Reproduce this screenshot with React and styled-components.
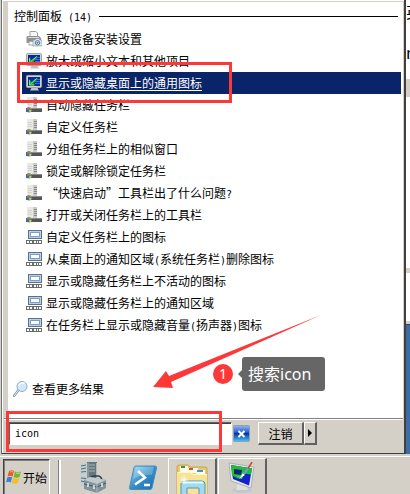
import React from "react";
import styled, { createGlobalStyle, css } from "styled-components";

const face = "#d4d0c8";
const red = "#fd3838";

const GlobalStyle = createGlobalStyle`
  * { box-sizing: border-box; }
  body {
    margin: 0;
    overflow: hidden;
    background: ${face};
    color: #000;
    font: 12px/22px "Noto Sans CJK SC", sans-serif;
  }
`;

const Page = styled.div`
  position: relative;
  display: flex;
  flex-direction: column;
  height: 100vh;
  overflow: hidden;
`;
const Desktop = styled.div`
  flex: 1;
  display: flex;
  min-height: 0;
`;
const Menu = styled.main`
  flex: 1;
  min-width: 0;
  display: flex;
  flex-direction: column;
  margin-left: 1px;
  padding-top: 1px;
  background: ${face};
  border: solid #404040;
  border-width: 0 2px 1px 1px;
  border-left-color: #707070;
  box-shadow: inset 1px 0 #fff, inset 0 1px #fff;
`;
const Results = styled.section`
  flex: 1;
  display: flex;
  flex-direction: column;
  margin: 0 1px 0 6px;
  padding: 3px 0 18px;
  background: #fff;
  border-top: 1px solid ${face};
`;
const Heading = styled.h2`
  display: flex;
  align-items: center;
  gap: 7px;
  margin: 0 5px 0 6px;
  font-size: 12px;
  font-weight: 400;
  line-height: 22px;
  white-space: pre;
  &::after {
    content: "";
    flex: 1;
    height: 1px;
    background: #000;
  }
`;
const Latin = styled.span`
  font: 10px/12px "DejaVu Sans Mono", monospace;
`;
const List = styled.ul`
  margin: 1px 2px 0 14px;
  padding: 0;
  list-style: none;
`;
const ResultLink = styled.a`
  display: flex;
  align-items: center;
  gap: 4px;
  height: 22px;
  padding-left: 4px;
  color: #000;
  text-decoration: none;
  white-space: nowrap;
  ${(p) => p.$selected && css`
    background: #0a246a;
    color: #fff;
    text-decoration: underline;
    text-underline-offset: 2px;
  `}
`;
const MoreLink = styled(ResultLink)`
  margin-top: auto;
`;
const Icon = styled.svg`
  flex: none;
  width: ${(p) => p.$w || 16}px;
  height: ${(p) => p.$h || p.$w || 16}px;
`;
const Footer = styled.form`
  display: flex;
  align-items: center;
  margin: 0 1px 0 2px;
  padding: 3px 5px 8px;
  border-top: 1px solid #808080;
  box-shadow: inset 0 1px #fff;
`;
const SearchInput = styled.input`
  flex: 0 1 223px;
  min-width: 0;
  height: 23px;
  padding: 0 5px;
  border: 1px solid;
  border-color: #606060 #fff #fff #606060;
  border-radius: 0;
  outline: 0;
  background: #fff;
  box-shadow: inset 0 1px #404040;
  font: 10px "DejaVu Sans Mono", monospace;
`;
const ClearButton = styled.button`
  display: flex;
  margin-left: 1px;
  padding: 0;
  border: 0;
  background: none;
`;
const raised = css`
  border: solid;
  border-width: 1px 2px 2px 1px;
  border-color: #fff #606060 #606060 #fff;
  background: ${face};
`;
const PushButton = styled.button`
  ${raised}
  display: flex;
  align-items: center;
  justify-content: center;
  width: ${(p) => p.$w}px;
  height: 23px;
  margin-left: ${(p) => p.$gap || 0}px;
  padding: 0;
  color: #000;
  font: 12px "Noto Sans CJK SC", sans-serif;
`;
const Behind = styled.aside`
  width: 4px;
  display: flex;
  flex-direction: column;
  overflow: hidden;
  background: #3a6ea5;
`;
const Band = styled.div`
  flex: none;
  height: ${(p) => p.$h}px;
  overflow: hidden;
  background: ${(p) => p.$c};
  font-size: 16px;
  line-height: 22px;
  white-space: nowrap;
`;
const Taskbar = styled.nav`
  display: flex;
  height: 40px;
  padding: 1px 3px 0;
  border-top: 2px solid ${face};
  background: ${face};
  box-shadow: inset 0 1px #fff;
`;
const StartButton = styled.button`
  display: flex;
  align-items: center;
  gap: 1px;
  width: 47px;
  margin-top: 2px;
  padding: 0 2px;
  border: solid;
  border-width: 1px 1px 0;
  border-color: #404040 #fff #fff #404040;
  background: ${face};
  box-shadow: inset 1px 1px #808080;
  color: #000;
  font: 12px "Noto Sans CJK SC", sans-serif;
`;
const Separator = styled.div`
  width: 3px;
  margin: 3px 7px 0 8px;
  border-left: 1px solid #808080;
  border-right: 2px solid #fff;
`;
const TaskButton = styled.button`
  ${raised}
  display: flex;
  justify-content: center;
  align-items: flex-start;
  width: ${(p) => (p.$open ? 49 : 50)}px;
  margin: 1px 1px 0 0;
  padding: 3px 0 0;
  border-bottom: 0;
  ${(p) => !p.$open && css`border-color: transparent; margin-right: 0;`}
`;

const Frame = styled.div`
  position: absolute;
  left: ${(p) => p.$x}px;
  top: ${(p) => p.$y}px;
  width: ${(p) => p.$w}px;
  height: ${(p) => p.$h}px;
  border: 3px solid ${red};
  pointer-events: none;
`;
const ArrowMark = styled.svg`
  position: absolute;
  left: 152px;
  top: 314px;
  width: 170px;
  height: 76px;
  pointer-events: none;
`;
const Callout = styled.div`
  position: absolute;
  left: 213px;
  top: 357px;
  display: flex;
  align-items: center;
  gap: 9px;
`;
const Badge = styled.span`
  width: 20px;
  height: 20px;
  border-radius: 50%;
  background: ${red};
  color: #fff;
  font: 14px/20px "Noto Sans", sans-serif;
  text-align: center;
`;
const Tip = styled.span`
  position: relative;
  width: 83px;
  padding-left: 6px;
  border-radius: 3px;
  background: #666;
  color: #fff;
  font: 16px/34px "Noto Sans", "Noto Sans CJK SC", sans-serif;
  white-space: nowrap;
  &::before {
    content: "";
    position: absolute;
    left: -4px;
    top: 13px;
    border: solid transparent;
    border-width: 4px 4px 4px 0;
    border-right-color: #666;
  }
`;

const Printer = () => (
  <Icon viewBox="0 0 16 16">
    <path d="M4 .5h6l1.500 1.500V6H4z" fill="#f4f6f8" stroke="#a0a0a0" />
    <path d="M1 5h12l2 2v5H.5V6z" fill="#8f9295" />
    <path d="M2 6.500h11" stroke="#d8d8d8" />
    <path d="M3 10.500h7v3.500H3z" fill="#f8f8f8" stroke="#aaa" />
    <path d="M7 9h2l1-1.500h3L14 9h2v6H7z" fill="#d9e3e9" stroke="#8297a5" strokeWidth=".6" />
    <circle cx="11.500" cy="11.800" r="2.200" fill="#f0f8fc" stroke="#557486" />
    <circle cx="11.500" cy="11.800" r="1" fill="#2d6f9d" />
  </Icon>
);
const Display = () => (
  <Icon viewBox="0 0 16 16">
    <path d="M6 12h5l2 3.500H4z" fill="#bfc2c0" />
    <rect x="0.500" y="0.500" width="15" height="12" rx="1" fill="#cfd0c8" stroke="#a4a69f" />
    <rect x="2" y="2" width="12" height="9" fill="#0925a8" />
    <path d="M9 4.500h5M8 6.500h6M9 8.500h5" stroke="#2874ef" />
    <path d="M3 4v6.500h6.500L7.500 8.500 12 4l-1.500-1L5.500 7z" fill="#1ca832" />
    <path d="M3.500 5v5h4.500M4.500 9l6-5.500" stroke="#98f37e" strokeWidth=".8" fill="none" />
  </Icon>
);
const TaskbarProps = () => (
  <Icon viewBox="0 0 16 16">
    <path d="M1 0h6v12H1z" fill="#e9e9e6" />
    <path d="M7 0h4v12H7z" fill="#cbcbc8" />
    <path d="M2 3.500h4M2 5.500h4M2 7.500h4" stroke="#d2d2cf" />
    <path d="M8 2.500h3M8 4.500h3M8 6.500h3M8 8.500h3" stroke="#888884" />
    <path d="M0 11h16v4H0z" fill="#555656" />
    <path d="M5 11.500h11" stroke="#8c8c8c" />
    <circle cx="3" cy="12.800" r="2.600" fill="#2b72c8" />
    <path d="M3 12.500v-2.300A2.600 2.600 0 0 0 .4 12.500z" fill="#ed632b" />
    <path d="M3.300 12.500v-2.300a2.600 2.600 0 0 1 2.300 2.300z" fill="#75bd30" />
    <path d="M3.300 13v2.400A2.600 2.600 0 0 0 5.600 13z" fill="#f4c82b" />
  </Icon>
);
const TrayIcon = () => (
  <Icon viewBox="0 0 16 16">
    <rect x="2.500" y="1.500" width="13" height="8" fill="#b4d2f2" stroke="#60707e" />
    <rect x="4.500" y="3.500" width="9" height="4" fill="#fff" stroke="#7b9ec1" />
    <path d="M0 11h16v4H0z" fill="#686c6b" />
    <path d="M1 13h2M4 13h2M8 13h2M11 13h1M13 13h2" stroke="#fff" strokeWidth="2" />
  </Icon>
);
const Magnifier = () => (
  <Icon viewBox="0 0 16 16">
    <path d="M2 15l4.500-6" stroke="#8798a5" strokeWidth="2.400" strokeLinecap="round" />
    <path d="M2 15l4.500-6" stroke="#e3ebf0" strokeLinecap="round" />
    <circle cx="10" cy="5.500" r="5" fill="#cfe8fc" stroke="#91acc1" />
    <path d="M6.500 5.500a4 4 0 0 1 6-3" stroke="#fff" strokeWidth="1.600" fill="none" />
  </Icon>
);
const ClearIcon = () => (
  <Icon viewBox="0 0 17 17" $w={17}>
    <defs>
      <linearGradient id="clear" x2="0" y2="1">
        <stop stopColor="#94b6ee" /><stop offset=".4" stopColor="#3463d2" />
        <stop offset=".5" stopColor="#0832a8" /><stop offset="1" stopColor="#48c8ef" />
      </linearGradient>
    </defs>
    <rect x=".5" y=".5" width="16" height="16" rx="1" fill="url(#clear)" stroke="#8ba1bb" />
    <path d="M5.500 6l6 6m0-6l-6 6" stroke="#fff" strokeWidth="2" />
  </Icon>
);
const WindowsLogo = () => (
  <Icon viewBox="0 0 16 16">
    <path d="M3 2q3-1.500 5 0L6.500 7.500q-2.500-1.500-5 0z" fill="#e85924" />
    <path d="M9 2.500q3 1.500 6 0L13.500 8q-3 1.500-6 0z" fill="#75b62b" />
    <path d="M1.200 8.500q2.500-1.500 5 0L4.700 13.500q-2.500-1.500-4.700 0z" fill="#3b80d0" />
    <path d="M7.200 9q3 1.500 6 0L11.700 14q-3 1.500-6 0z" fill="#f7bd22" />
    <path d="M4 3q2-.8 3 0M10 4q2 .8 4 0" stroke="#fff" opacity=".5" fill="none" />
  </Icon>
);
const ServerManager = () => (
  <Icon viewBox="0 0 30 32" $w={30} $h={32}>
    <path d="M2 2l7-2v26l-7-3z" fill="#c4cfd1" />
    <path d="M9 0h10v26H9z" fill="#65777d" />
    <path d="M3 4l5-1M3 7l5-1M3 10l5-.5M3 16l5 .5M3 19l5 1" stroke="#53686e" />
    <path d="M11 3h6M11 6h6M11 9h6" stroke="#a6b5b8" />
    <path d="M10 1v24M18.500 1v16" stroke="#aab9bc" />
    <path d="M12 17q1-3 4-3h4q3 0 4 4" fill="none" stroke="#313b40" strokeWidth="1.600" />
    <path d="M6 18l6-3 16 3v8l-9 5L6 27z" fill="#82939a" />
    <path d="M6 18l6-3 16 3-9 4z" fill="#c0cacd" />
    <path d="M6 22l13 3 9-4" stroke="#48575e" fill="none" />
    <path d="M19 22v9" stroke="#aebabe" />
    <path d="M10 21v4M16 23v4M24 21v4" stroke="#e9eeef" strokeWidth="1.500" />
  </Icon>
);
const PowerShell = () => (
  <Icon viewBox="0 -2 30 30" $w={30} $h={30}>
    <defs>
      <linearGradient id="shell" x2="1" y2="1">
        <stop stopColor="#a4dcf5" /><stop offset=".5" stopColor="#368fc8" /><stop offset="1" stopColor="#176ba9" />
      </linearGradient>
    </defs>
    <path d="M8 2h19q2 0 1.500 2L24 24q-.5 1.500-2 1.500H3q-2 0-1.500-2L6 3.500Q6.500 2 8 2z" fill="url(#shell)" stroke="#4390bd" />
    <path d="M8 3h18l-2 8Q14 10 5 15z" fill="#fff" opacity=".23" />
    <path d="M10 7l7 6.500-10 7M16 21h6" fill="none" stroke="#fff" strokeWidth="2.500" />
  </Icon>
);
const Explorer = () => (
  <Icon viewBox="0 0 34 34" $w={34} $h={34}>
    <path d="M2 5q0-2 2-2h9l2 2h15q2 0 2 2v25H2z" fill="#eac968" stroke="#c6a34a" />
    <path d="M5 4h8v6H5zM13 6h10v5H13zM21 8h9v5h-9z" fill="#fffced" />
    <path d="M6 4h4v2H6z" fill="#2b9c38" /><path d="M14 6h4v2h-4z" fill="#e14b30" /><path d="M22 8h6v2h-6z" fill="#3495dc" />
    <path d="M2 10h13l3 2h14v20H2z" fill="#f8e394" />
    <path d="M3 10.500h12l3 2h14" stroke="#fff7c4" fill="none" />
    <path d="M6 34V22q0-3 3-3h18q3 0 3 3v12h-6v-8H12v8z" fill="#a5d8f0" stroke="#469abd" />
    <path d="M8 20.500h20" stroke="#e4f8ff" strokeWidth="2" />
    <path d="M9 13v9M5 18h8M6 15l6 6m0-6l-6 6" stroke="#fff" strokeWidth=".8" />
  </Icon>
);
const Personalize = () => (
  <Icon viewBox="0 0 30 32" $w={30} $h={32}>
    <ellipse cx="15" cy="28" rx="10" ry="3" fill="#c3c7c7" />
    <path d="M11 21h8l2 7H9z" fill="#dde0df" />
    <path d="M2 1l25 4-3 21L4 19z" fill="#e6e9e9" stroke="#aab0b0" />
    <path d="M4 3l21 3.500-3 17L6 17z" fill="#1022c8" />
    <path d="M4 3l21 3.500-1 6-7-1-6 5-6-3z" fill="#20bf32" />
    <path d="M7 7l8 1-1 5-7-1z" fill="#092380" />
    <path d="M9 13l4 1 4-2-2 5-4-1z" fill="#37d13d" />
    <path d="M12 17l4-6 2 2z" fill="#fff" />
    <path d="M17 12l4.500-6" stroke="#679bed" strokeWidth="2" />
    <path d="M21 6.500L25 0" stroke="#cb4430" strokeWidth="1.500" />
  </Icon>
);

const results = [
  [Printer, "更改设备安装设置"],
  [Display, "放大或缩小文本和其他项目"],
  [Display, "显示或隐藏桌面上的通用图标"],
  [TaskbarProps, "自动隐藏任务栏"],
  [TaskbarProps, "自定义任务栏"],
  [TaskbarProps, "分组任务栏上的相似窗口"],
  [TaskbarProps, "锁定或解除锁定任务栏"],
  [TaskbarProps, "“快速启动”工具栏出了什么问题?"],
  [TaskbarProps, "打开或关闭任务栏上的工具栏"],
  [TrayIcon, "自定义任务栏上的图标"],
  [TrayIcon, "从桌面上的通知区域(系统任务栏)删除图标"],
  [TrayIcon, "显示或隐藏任务栏上不活动的图标"],
  [TrayIcon, "显示或隐藏任务栏上的通知区域"],
  [TrayIcon, "在任务栏上显示或隐藏音量(扬声器)图标"],
];

const Label = ({ text }) => (
  <span>
    {text.split(/([()?])/).map((part, i) => (i % 2 ? <Latin key={i}>{part}</Latin> : part))}
  </span>
);

export default function App() {
  return (
    <Page lang="zh-CN">
      <GlobalStyle />
      <Desktop>
        <Menu>
          <Results>
            <Heading><span>控制面板<Latin> (14)</Latin></span></Heading>
            <List>
              {results.map(([Glyph, text], i) => (
                <li key={text}>
                  <ResultLink href="#" $selected={i === 2}><Glyph /><Label text={text} /></ResultLink>
                </li>
              ))}
            </List>
            <MoreLink href="#"><Magnifier />查看更多结果</MoreLink>
          </Results>
          <Footer onSubmit={(e) => e.preventDefault()}>
            <SearchInput aria-label="搜索" defaultValue="icon" />
            <ClearButton type="button" aria-label="清除"><ClearIcon /></ClearButton>
            <PushButton type="button" $w={46} $gap={8}>注销</PushButton>
            <PushButton type="button" $w={13} aria-label="更多选项">
              <Icon viewBox="0 0 4 8" $w={4} $h={8}><path d="M0 0l4 4-4 4z" /></Icon>
            </PushButton>
          </Footer>
        </Menu>
        <Behind aria-hidden="true">
          <Band $h={41} $c="#fff">英</Band>
          <Band $h={38} $c="#fff">m</Band>
          <Band $h={18} $c={face} />
          <Band $h={171} $c="#fff" />
          <Band $h={5} $c={face} />
          <Band $h={48} $c="#fff" />
          <Band $h={3} $c={face} />
          <Band $h={1} $c="#404040" />
        </Behind>
      </Desktop>
      <Taskbar>
        <StartButton><WindowsLogo />开始</StartButton>
        <Separator />
        <TaskButton aria-label="服务器管理器"><ServerManager /></TaskButton>
        <TaskButton aria-label="PowerShell"><PowerShell /></TaskButton>
        <TaskButton $open aria-label="资源管理器"><Explorer /></TaskButton>
        <TaskButton $open aria-label="个性化"><Personalize /></TaskButton>
      </Taskbar>
      <Frame $x={17} $y={62} $w={215} $h={41} />
      <Frame $x={6} $y={411} $w={216} $h={41} />
      <ArrowMark viewBox="0 0 170 76">
        <path d="M169 1L17 62l-3-5L1 73l20 1-2-6L28 64z" fill={red} />
      </ArrowMark>
      <Callout><Badge>1</Badge><Tip>搜索icon</Tip></Callout>
    </Page>
  );
}
